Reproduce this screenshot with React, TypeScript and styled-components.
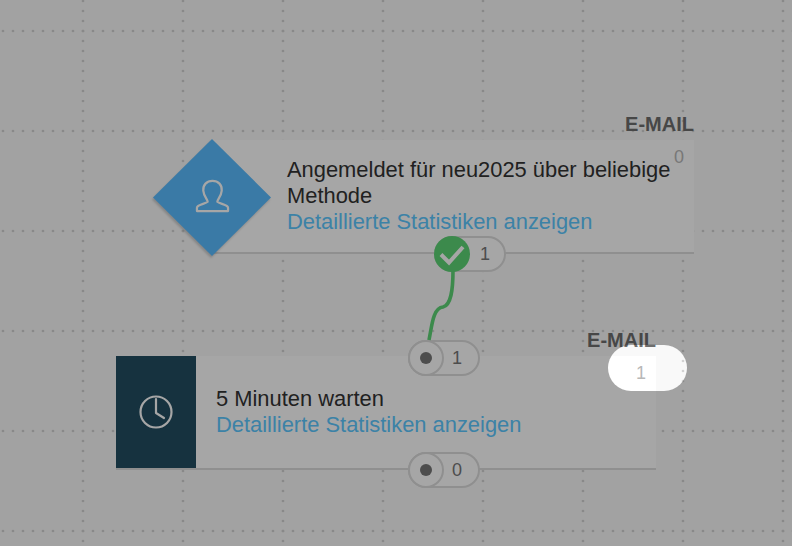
import React from "react";
import styled, { createGlobalStyle } from "styled-components";

const Global = createGlobalStyle`
  html, body { margin: 0; padding: 0; height: 100%; overflow: hidden; background: #f9f9f9; }
  * { box-sizing: border-box; }
`;

const Canvas = styled.div`
  position: relative;
  width: 792px;
  height: 546px;
  overflow: hidden;
  background: #f9f9f9;
  font-family: "Liberation Sans", Arial, sans-serif;
`;

const GridLayer = styled.svg`
  position: absolute;
  inset: 0;
`;

const Node = styled.div<{ $left: number; $top: number; $width: number }>`
  position: absolute;
  left: ${(p) => p.$left}px;
  top: ${(p) => p.$top}px;
  width: ${(p) => p.$width}px;
`;

const Label = styled.div`
  position: absolute;
  right: 0;
  top: -27px;
  font-size: 20px;
  line-height: 23px;
  font-weight: 700;
  color: #6e6e6e;
`;

const Card = styled.div`
  display: flex;
  height: 114px;
  background: #fff;
  border-bottom: 2px solid #dcdcdc;
`;

const Corner = styled.span`
  position: absolute;
  right: 10px;
  top: 7px;
  font-size: 18px;
  line-height: 20px;
  color: #b8b8b8;
`;

const Badge = styled.div`
  flex: none;
  width: 80px;
  display: flex;
  align-items: center;
  justify-content: center;
  background: #234e61;
`;

const DiamondShadow = styled.div`
  position: absolute;
  left: -59px;
  top: -1px;
  filter: drop-shadow(-1px 2px 1px rgba(0, 0, 0, 0.18));
`;

const Diamond = styled.div`
  width: 118px;
  height: 117px;
  padding-bottom: 3px;
  display: flex;
  align-items: center;
  justify-content: center;
  background: #5abcff;
  clip-path: polygon(50% 0, 100% 50%, 50% 100%, 0 50%);
`;

const Body = styled.div<{ $inset: number }>`
  flex: 1;
  display: flex;
  flex-direction: column;
  justify-content: center;
  padding: 0 20px 0 ${(p) => p.$inset}px;
  font-size: 21.9px;
  line-height: 26px;
`;

const Title = styled.div`
  color: #333;
`;

const StatsLink = styled.a`
  color: #5cc8ff;
  text-decoration: none;
`;

const Port = styled.div<{ $left: number; $top: number; $pad: number }>`
  position: absolute;
  left: ${(p) => p.$left}px;
  top: ${(p) => p.$top}px;
  width: 72px;
  height: 36px;
  display: flex;
  align-items: center;
  justify-content: flex-end;
  padding-right: ${(p) => p.$pad}px;
  border: 2px solid #dcdcdc;
  border-radius: 18px;
  background: #fff;
  font-size: 18px;
  color: #777;
`;

const PortKnob = styled.div`
  position: absolute;
  left: -2px;
  top: -2px;
  width: 36px;
  height: 36px;
  display: flex;
  align-items: center;
  justify-content: center;
  border: 2px solid #dcdcdc;
  border-radius: 50%;
  background: #fff;
  &::after {
    content: "";
    width: 12px;
    height: 12px;
    border-radius: 50%;
    background: #777;
  }
`;

const Wire = styled.svg`
  position: absolute;
  inset: 0;
`;

const Dim = styled.div`
  position: absolute;
  inset: 0;
  overflow: hidden;
  pointer-events: none;
`;

const Spotlight = styled.div`
  position: absolute;
  left: 608px;
  top: 345px;
  width: 79px;
  height: 46px;
  border-radius: 23px;
  box-shadow: 0 0 0 1200px rgba(0, 0, 0, 0.35);
`;

const dotsH = Array.from({ length: 10 }, (_, i) => i * 10 + 3);
const dotsV = Array.from({ length: 10 }, (_, i) => i * 10 + 1);

const UserIcon = () => (
  <svg width="35" height="34" viewBox="0 0 36 35" fill="none" stroke="#fff" strokeWidth="2.3" strokeLinejoin="round">
    <path d="M2 33V29.5C2 26.5 11 25.5 13 23.5C13 21 9 18 8.5 12C8 6 12 2 18 2C24 2 28 6 27.5 12C27 18 23 21 23 23.5C25 25.5 34 26.5 34 29.5V33Z" />
  </svg>
);

const ClockIcon = () => (
  <svg width="34" height="34" viewBox="0 0 34 34" fill="none" stroke="#fff" strokeWidth="2.2" strokeLinecap="round" strokeLinejoin="round">
    <circle cx="17" cy="17" r="15.5" />
    <path d="M17 4V18L25 23" />
  </svg>
);

export default function App() {
  return (
    <Canvas>
      <Global />
      <GridLayer width="792" height="546">
        <defs>
          <pattern id="dots" width="100" height="100" patternUnits="userSpaceOnUse" x="0" y="0">
            {dotsH.map((x) => (
              <circle key={`h${x}`} cx={x} cy={31} r={1.35} fill="#d3d3d3" />
            ))}
            {dotsV.map((y) => (
              <circle key={`v${y}`} cx={83} cy={y} r={1.35} fill="#d3d3d3" />
            ))}
          </pattern>
        </defs>
        <rect width="792" height="546" fill="url(#dots)" />
      </GridLayer>

      <Node $left={212} $top={140} $width={482}>
        <Label>E-MAIL</Label>
        <Card>
          <Body $inset={75}>
            <Title>Angemeldet für neu2025 über beliebige Methode</Title>
            <StatsLink href="#">Detaillierte Statistiken anzeigen</StatsLink>
          </Body>
        </Card>
        <Corner>0</Corner>
        <DiamondShadow>
          <Diamond>
            <UserIcon />
          </Diamond>
        </DiamondShadow>
      </Node>

      <Node $left={116} $top={356} $width={540}>
        <Label>E-MAIL</Label>
        <Card>
          <Badge>
            <ClockIcon />
          </Badge>
          <Body $inset={20}>
            <Title>5 Minuten warten</Title>
            <StatsLink href="#">Detaillierte Statistiken anzeigen</StatsLink>
          </Body>
        </Card>
        <Corner>1</Corner>
      </Node>

      <Port $left={434} $top={236} $pad={14}>1</Port>
      <Port $left={408} $top={340} $pad={16}>
        <PortKnob />1
      </Port>
      <Port $left={408} $top={452} $pad={16}>
        <PortKnob />0
      </Port>

      <Wire width="792" height="546">
        <path d="M453 270C453 290 451 305 443 307C433 308 432 325 429 340" fill="none" stroke="#5dd476" strokeWidth="3.6" />
        <circle cx="452" cy="254" r="18" fill="#5dd476" />
        <path d="M441 254.5L449 262.5L463 247" fill="none" stroke="#fff" strokeWidth="4" />
      </Wire>

      <Dim>
        <Spotlight />
      </Dim>
    </Canvas>
  );
}
